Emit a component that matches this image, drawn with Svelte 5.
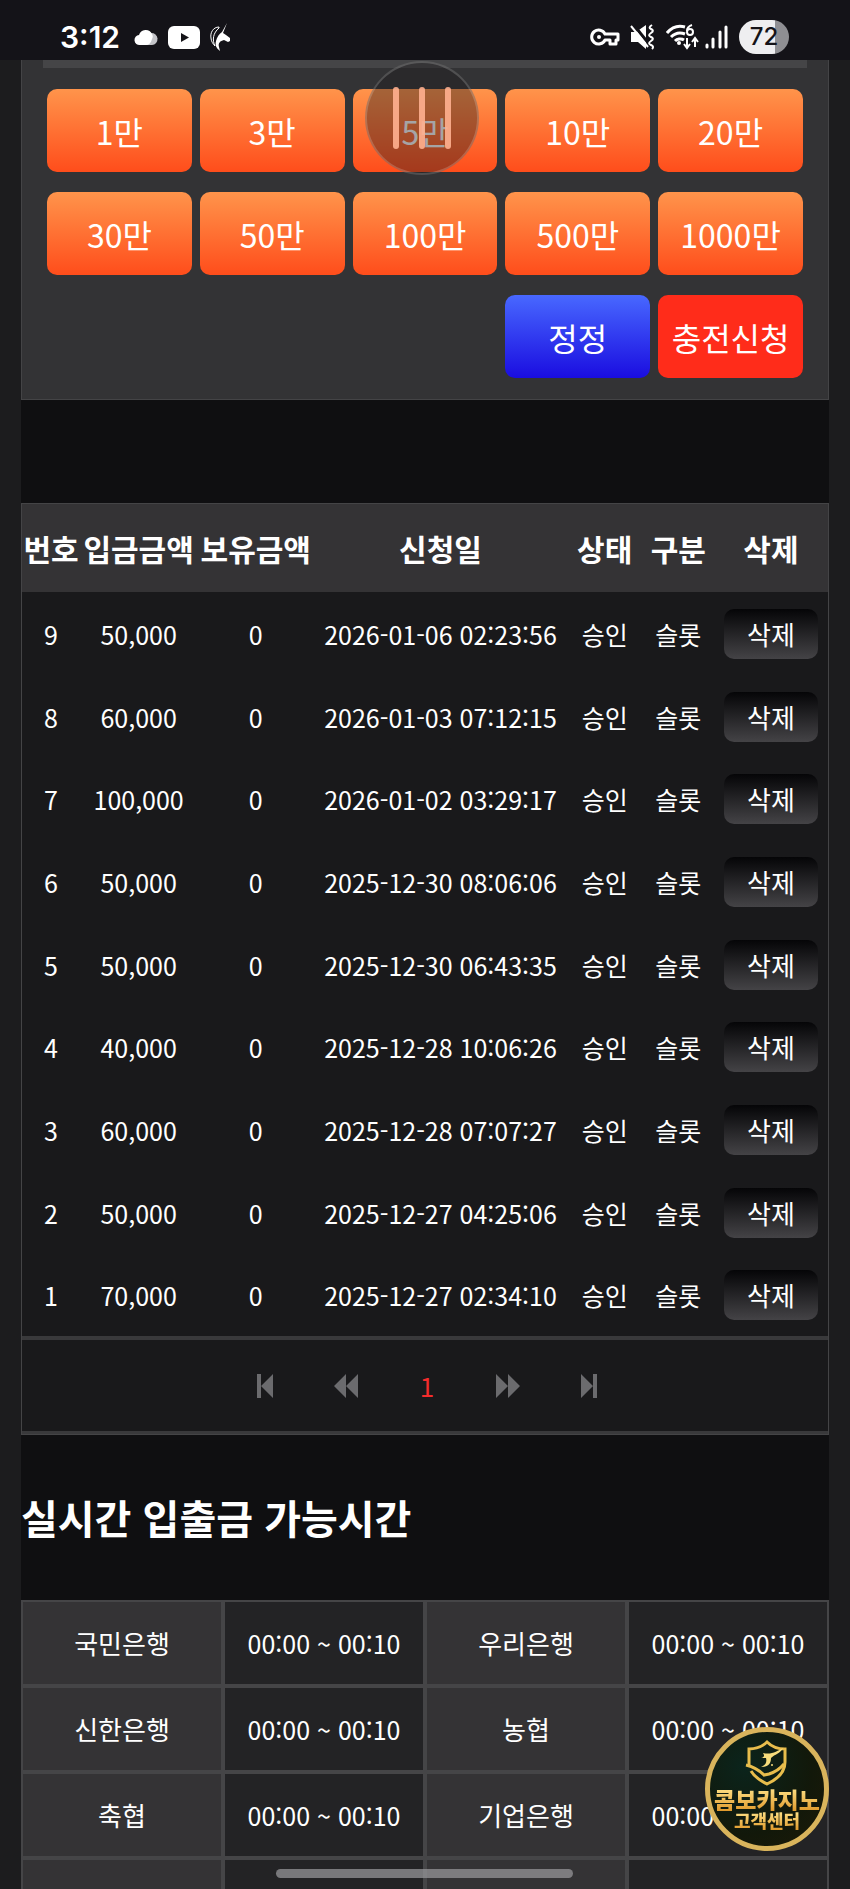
<script lang="ts">
  interface Deposit {
    no: number;
    amount: number;
    balance: number;
    date: string;
  }

  const amounts = [1, 3, 5, 10, 20, 30, 50, 100, 500, 1000];

  let total = $state(0);

  let deposits: Deposit[] = $state([
    { no: 9, amount: 50000, balance: 0, date: '2026-01-06 02:23:56' },
    { no: 8, amount: 60000, balance: 0, date: '2026-01-03 07:12:15' },
    { no: 7, amount: 100000, balance: 0, date: '2026-01-02 03:29:17' },
    { no: 6, amount: 50000, balance: 0, date: '2025-12-30 08:06:06' },
    { no: 5, amount: 50000, balance: 0, date: '2025-12-30 06:43:35' },
    { no: 4, amount: 40000, balance: 0, date: '2025-12-28 10:06:26' },
    { no: 3, amount: 60000, balance: 0, date: '2025-12-28 07:07:27' },
    { no: 2, amount: 50000, balance: 0, date: '2025-12-27 04:25:06' },
    { no: 1, amount: 70000, balance: 0, date: '2025-12-27 02:34:10' },
  ]);

  const hours = '00:00 ~ 00:10';
  const banks = [
    ['국민은행', '우리은행'],
    ['신한은행', '농협'],
    ['축협', '기업은행'],
    ['', ''],
  ];

  function remove(no: number) {
    deposits = deposits.filter((d) => d.no !== no);
  }
</script>

<div class="screen" lang="ko">
  <header class="status">
    <span class="time">3:12</span>
    <svg width="24" height="18" viewBox="0 0 24 18">
      <path d="M17 5a6 6 0 0 1 1 12H9z" fill="#c4c4c8" />
      <path d="M6 17a5 5 0 0 1-1-10 7 7 0 0 1 13-1c1 2 1 3 0 5-1 4-3 6-6 6z" fill="#fff" />
    </svg>
    <svg width="32" height="23" viewBox="0 0 32 23">
      <rect width="32" height="23" rx="6" fill="#fff" />
      <path d="M13 7v9l8-4.500z" fill="#141318" />
    </svg>
    <svg width="21" height="29" viewBox="0 0 21 29">
      <path d="M17 0l-4 10 3 2 4 3 0 3-2 1-4-2c-4 1-6 3-5 7l1 4c-4-3-5-6-4-10 1-4 3-7 6-9z" fill="#fff" />
      <path d="M9 4C3 4 0 10 1 15c0 3 2 6 4 8C2 17 3 10 9 5z" fill="none" stroke="#fff" stroke-width="1" />
    </svg>

    <div class="signals">
      <svg width="30" height="20" viewBox="0 0 30 20" fill="none" stroke="#fff" stroke-width="3">
        <path d="M15 7A7 7 0 1 0 15 13H20V17H26V13H28V7Z" stroke-linejoin="round" />
        <circle cx="9" cy="10" r="2" fill="#fff" stroke="none" />
      </svg>
      <svg width="26" height="26" viewBox="0 0 26 26">
        <path d="M1 8h5l10-7v24l-8-7H1z" fill="#fff" />
        <path d="M3 0l16 20" stroke="#141318" stroke-width="3" />
        <path d="M1 2l17 21" stroke="#fff" stroke-width="2" />
        <path
          d="M22 1c-3 2-3 3-1 4s3 2 0 4-2 3 0 4 3 2 0 4-2 3 0 4 3 2 1 4"
          fill="none" stroke="#fff" stroke-width="2"
        />
      </svg>
      <svg width="33" height="26" viewBox="0 0 33 26" fill="none" stroke="#fff" stroke-width="2">
        <path d="M1 9C6 3 12 1 19 3M5 13c4-4 9-5 14-3M9 17c2-2 6-3 9-1" stroke-width="3" />
        <circle cx="13" cy="19" r="2" fill="#fff" stroke="none" />
        <path d="M26 1c-3 1-5 3-5 6" />
        <circle cx="24" cy="8" r="3" />
        <path d="M21 14v9m-3-3l3 4 3-4M29 23v-8m-3 3l3-4 3 4" />
      </svg>
      <svg
        class="bars" width="24" height="26" viewBox="0 0 24 26"
        stroke="#fff" stroke-width="3" stroke-linecap="round"
      >
        <path d="M2 21v2M8 15v8M15 8v15M21 3v20" />
      </svg>
      <span class="battery">72</span>
    </div>
  </header>

  <main>
    <section class="charge">
      <div class="field-edge"></div>
      <div class="amounts">
        {#each amounts as n (n)}
          <button class="pay" onclick={() => (total += n * 10000)}>{n}만</button>
        {/each}
        <button class="pay reset" onclick={() => (total = 0)}>정정</button>
        <button class="pay submit">충전신청</button>
      </div>
    </section>

    <section class="history">
      <table class="deposits">
        <colgroup>
          <col class="c-no" /><col class="c-sum" /><col class="c-sum" /><col class="c-date" />
          <col class="c-state" /><col class="c-kind" /><col class="c-del" />
        </colgroup>
        <thead>
          <tr>
            <th>번호</th>
            <th>입금금액</th>
            <th>보유금액</th>
            <th>신청일</th>
            <th>상태</th>
            <th>구분</th>
            <th>삭제</th>
          </tr>
        </thead>
        <tbody>
          {#each deposits as d (d.no)}
            <tr>
              <td>{d.no}</td>
              <td>{d.amount.toLocaleString('en-US')}</td>
              <td>{d.balance}</td>
              <td>{d.date}</td>
              <td>승인</td>
              <td>슬롯</td>
              <td><button class="delete" onclick={() => remove(d.no)}>삭제</button></td>
            </tr>
          {/each}
        </tbody>
      </table>

      <nav class="pager" aria-label="페이지">
        <button aria-label="처음">
          <svg width="24" height="24" viewBox="0 0 24 24"><path d="M4 0h4v24H4zM20 0v24L8 12z" /></svg>
        </button>
        <button aria-label="이전">
          <svg width="24" height="24" viewBox="0 0 24 24"><path d="M12 0v24L0 12zM24 0v24L12 12z" /></svg>
        </button>
        <button class="current" aria-current="page">1</button>
        <button aria-label="다음">
          <svg width="24" height="24" viewBox="0 0 24 24"><path d="M0 0v24l12-12zM12 0v24l12-12z" /></svg>
        </button>
        <button aria-label="마지막">
          <svg width="24" height="24" viewBox="0 0 24 24"><path d="M16 0h4v24h-4zM4 0v24l12-12z" /></svg>
        </button>
      </nav>
    </section>

    <h2>실시간 입출금 가능시간</h2>

    <table class="banks">
      <tbody>
        {#each banks as pair, i (i)}
          <tr>
            {#each pair as bank}
              <th scope="row">{bank}</th>
              <td>{bank ? hours : ''}</td>
            {/each}
          </tr>
        {/each}
      </tbody>
    </table>
  </main>

  <button class="bubble" aria-label="메뉴"><i></i><i></i><i></i></button>

  <a class="support" href="#support">
    <svg width="44" height="48" viewBox="0 0 44 48" fill="none" stroke="#e8bd4c" stroke-width="3">
      <path d="M4 26V10c7 0 13-2 18-7 5 5 11 7 18 7v13c0 10-7 17-18 22C14 41 9 37 6 32" />
      <path d="M1 26c8 2 13 5 18 10l5-1c6-2 11-5 15-10" />
      <path d="M18 14c9 2 14-2 20-5-3 6-8 6-12 10 0 6-3 9-10 9 5-2 6-5 5-9h-5c3-1 4-2 2-5z" fill="#f6dc7c" stroke="none" />
      <circle cx="27" cy="26" r="1" fill="#f6dc7c" stroke="none" />
    </svg>
    <strong>콤보카지노</strong>
    <span>고객센터</span>
  </a>

  <div class="home-bar"></div>
</div>

<style>
  :global(body) {
    background: #1c1c1e;
  }

  .screen {
    position: relative;
    height: 100vh;
    overflow: hidden;
    color: #fff;
    font-family: 'Noto Sans CJK KR', sans-serif;
    font-size: 26px;
    line-height: 38px;
  }

  button {
    border: none;
    padding: 0;
    color: inherit;
    font: inherit;
    cursor: pointer;
  }

  table {
    width: 100%;
    table-layout: fixed;
    border-spacing: 0;
  }

  th,
  td {
    padding: 0;
    text-align: center;
    white-space: nowrap;
  }

  td {
    font-size: 25px;
  }

  /* phone status bar */
  .status {
    display: flex;
    align-items: center;
    gap: 10px;
    height: 60px;
    box-sizing: border-box;
    padding: 14px 61px 0 60px;
    background: #141318;
  }

  .time {
    margin-right: 4px;
    font-family: Inter, sans-serif;
    font-size: 30px;
    font-weight: 600;
  }

  .signals {
    display: flex;
    align-items: center;
    gap: 10px;
    margin-left: auto;
  }

  .bars {
    margin-left: -4px;
  }

  .battery {
    width: 50px;
    border-radius: 17px;
    background: linear-gradient(90deg, #eeeef0 72%, #8f8f93 72%);
    color: #141318;
    font-family: Inter, sans-serif;
    font-size: 24px;
    font-weight: 500;
    line-height: 34px;
    text-align: center;
  }

  main {
    padding: 0 21px;
    background: linear-gradient(#0f0f11, #0f0f11) content-box;
  }

  /* charge form */
  .charge {
    border: 1px solid #444446;
    border-top: none;
    background: #333335;
  }

  .field-edge {
    height: 8px;
    margin: 0 21px;
    background: #454547;
  }

  .amounts {
    display: grid;
    grid-template-columns: repeat(5, 1fr);
    gap: 20px 8px;
    padding: 21px 25px;
  }

  .pay {
    height: 83px;
    border-radius: 10px;
    background: linear-gradient(#ff944b, #ff4d1b);
    font-size: 32px;
  }

  .pay.reset {
    grid-column: 4;
    background: linear-gradient(#4868ff, #1a0de0);
  }

  .pay.submit {
    background: #ff2c1a;
  }

  /* deposit history */
  .history {
    margin-top: 103px;
    border: 1px solid #444446;
    background: #19191b;
  }

  .c-no {
    width: 58px;
  }

  .c-sum {
    width: 117px;
  }

  .c-date {
    width: 252px;
  }

  .c-state {
    width: 76px;
  }

  .c-kind {
    width: 71px;
  }

  .c-del {
    width: 114px;
  }

  .deposits th {
    height: 88px;
    background: #343335;
    font-size: 30px;
    font-weight: 700;
  }

  .deposits td {
    height: 83px;
  }

  .deposits tr:nth-child(3n) td {
    height: 82px;
  }

  .delete {
    width: 94px;
    height: 50px;
    border-radius: 10px;
    background: linear-gradient(#050507, #444346);
    font-size: 26px;
  }

  .pager {
    display: flex;
    justify-content: center;
    border-top: 4px solid #39393b;
    border-bottom: 3px solid #39393b;
    padding: 27px 0 26px 4px;
  }

  .pager button {
    display: flex;
    align-items: center;
    justify-content: center;
    width: 81px;
    background: none;
    fill: #6b6b6e;
  }

  .pager .current {
    color: #f42c2c;
  }

  h2 {
    margin: 0;
    padding: 53px 0 54px;
    font-size: 40px;
    line-height: 58px;
  }

  .banks th,
  .banks td {
    height: 82px;
    border: 2px solid #454547;
    background: #232325;
    font-weight: 400;
  }

  .banks th {
    background: #343335;
  }

  /* floating layers */
  .bubble {
    position: absolute;
    top: 61px;
    left: 50%;
    display: flex;
    align-items: center;
    justify-content: center;
    gap: 20px;
    width: 114px;
    height: 114px;
    margin-left: -60px;
    border: 2px solid rgb(255 255 255 / 18%);
    border-radius: 50%;
    background: rgb(30 28 30 / 40%);
  }

  .bubble i {
    width: 6px;
    height: 62px;
    border-radius: 3px;
    background: rgb(255 176 144 / 90%);
  }

  .support {
    position: absolute;
    right: 21px;
    bottom: 38px;
    display: flex;
    flex-direction: column;
    align-items: center;
    width: 124px;
    height: 124px;
    box-sizing: border-box;
    padding-top: 7px;
    border: 5px solid #d9b45c;
    border-radius: 50%;
    background: radial-gradient(circle at 30% 30%, #0b241c, #12180a 60%, #1c1a08);
    color: #f0b83c;
    font-size: 18px;
    font-weight: 900;
    line-height: 19px;
    text-decoration: none;
    white-space: nowrap;
  }

  .support strong,
  .support span {
    background: linear-gradient(#ffe48a, #e09a2c);
    background-clip: text;
    color: transparent;
  }

  .support strong {
    font-size: 23px;
    font-weight: 900;
    line-height: 24px;
  }

  .home-bar {
    position: absolute;
    bottom: 11px;
    left: 50%;
    width: 297px;
    height: 9px;
    margin-left: -149px;
    border-radius: 5px;
    background: rgb(150 150 152 / 75%);
  }
</style>
